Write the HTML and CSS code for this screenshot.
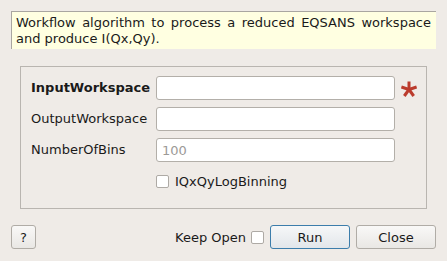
FILE: index.html
```html
<!DOCTYPE html>
<html lang="en">
<head>
  <meta charset="UTF-8">
  <title>EQSANSQ2D</title>
  <link rel="stylesheet" href="styles.css">
</head>
<body>
  <div class="dialog">
    <div class="desc">
      Workflow algorithm to process a reduced EQSANS workspace and produce I(Qx,Qy).
    </div>

    <div class="group">
      <label class="lbl bold">InputWorkspace</label>
      <input class="field" type="text">
      <span class="star">
        <svg width="16" height="16" viewBox="0 0 16 16">
          <g stroke="#bb3b2d" stroke-width="3" stroke-linecap="butt">
            <line x1="8" y1="8.5" x2="8" y2="0.5"/>
            <line x1="8" y1="8.5" x2="15.6" y2="6"/>
            <line x1="8" y1="8.5" x2="12.7" y2="15"/>
            <line x1="8" y1="8.5" x2="3.3" y2="15"/>
            <line x1="8" y1="8.5" x2="0.4" y2="6"/>
          </g>
        </svg>
      </span>

      <label class="lbl">OutputWorkspace</label>
      <input class="field" type="text">
      <span></span>

      <label class="lbl">NumberOfBins</label>
      <input class="field" type="text" placeholder="100">
      <span></span>

      <span></span>
      <label class="check"><span class="box"></span>IQxQyLogBinning</label>
      <span></span>
    </div>

    <div class="footer">
      <button class="btn help">?</button>
      <div class="spacer"></div>
      <label class="keep">Keep Open <span class="box"></span></label>
      <button class="btn run">Run</button>
      <button class="btn">Close</button>
    </div>
  </div>
</body>
</html>
```

FILE: styles.css
```css
body {
  margin: 0;
  background: #efebe7;
  font-family: "DejaVu Sans", sans-serif;
  font-size: 13px;
  color: #1a1a1a;
}
.dialog {
  width: 447px;
  height: 261px;
  padding: 11px 11px 0 11px;
  box-sizing: border-box;
}
.desc {
  height: 38px;
  box-sizing: border-box;
  background: #ffffe1;
  border-top: 1px solid #a9a6a1;
  border-left: 1px solid #a9a6a1;
  padding: 3px 5px 0 4px;
  line-height: 16px;
  text-align: justify;
}
.group {
  margin: 17px 9px 0 9px;
  height: 143px;
  box-sizing: border-box;
  border: 1px solid #b9b5b0;
  padding: 9px 0 0 10px;
  display: grid;
  grid-template-columns: 125px 239px 22px;
  grid-auto-rows: 24px;
  row-gap: 7px;
  align-items: center;
}
.lbl {
  line-height: 16px;
}
.bold {
  font-weight: bold;
}
.field {
  height: 24px;
  box-sizing: border-box;
  border: 1px solid #b3afa9;
  border-radius: 3px;
  background: #fff;
  font-family: "DejaVu Sans", sans-serif;
  font-size: 13px;
  padding: 0 5px;
  margin: 0;
}
.field::placeholder {
  color: #9c9a97;
}
.star {
  height: 24px;
  box-sizing: border-box;
  padding: 5px 0 0 6px;
}
.star svg {
  display: block;
}
.check {
  display: flex;
  align-items: center;
  gap: 6px;
}
.box {
  display: inline-block;
  width: 13px;
  height: 13px;
  box-sizing: border-box;
  border: 1px solid #aeaaa5;
  border-radius: 2px;
  background: #fff;
}
.footer {
  margin-top: 16px;
  display: flex;
  align-items: center;
  gap: 6px;
}
.spacer {
  flex: 1;
}
.keep {
  display: flex;
  align-items: center;
  gap: 5px;
}
.btn {
  height: 24px;
  width: 80px;
  box-sizing: border-box;
  border: 1px solid #b0aca6;
  border-radius: 3px;
  background: linear-gradient(#f9f8f7, #e9e7e4);
  font-family: "DejaVu Sans", sans-serif;
  font-size: 13px;
  color: #1a1a1a;
  padding: 0;
  margin: 0;
}
.help {
  width: 25px;
}
.run {
  border-color: #3c7dab;
  background: linear-gradient(#f6f7f8, #e2e6ea);
}
```
